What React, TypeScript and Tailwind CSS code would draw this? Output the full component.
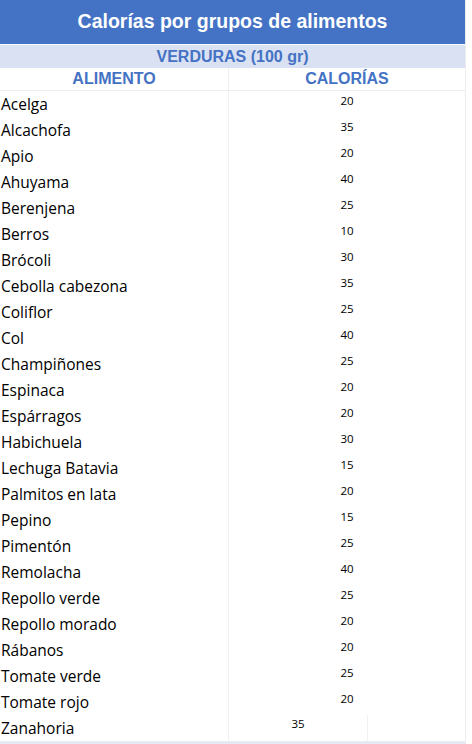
import React from "react";

const rows: [string, string][] = [
  ["Acelga", "20"],
  ["Alcachofa", "35"],
  ["Apio", "20"],
  ["Ahuyama", "40"],
  ["Berenjena", "25"],
  ["Berros", "10"],
  ["Brócoli", "30"],
  ["Cebolla cabezona", "35"],
  ["Coliflor", "25"],
  ["Col", "40"],
  ["Champiñones", "25"],
  ["Espinaca", "20"],
  ["Espárragos", "20"],
  ["Habichuela", "30"],
  ["Lechuga Batavia", "15"],
  ["Palmitos en lata", "20"],
  ["Pepino", "15"],
  ["Pimentón", "25"],
  ["Remolacha", "40"],
  ["Repollo verde", "25"],
  ["Repollo morado", "20"],
  ["Rábanos", "20"],
  ["Tomate verde", "25"],
  ["Tomate rojo", "20"],
];

export default function App() {
  return (
    <div className="w-[472px] h-[744px] bg-white overflow-hidden flex flex-col">
      <div className="w-[466px] flex flex-col border-r border-[#ececec]">
        <div className="h-[44px] bg-[#4472c4] flex items-center justify-center text-white font-bold text-[19.5px] font-['Liberation_Sans',Arial,sans-serif]">
          Calorías por grupos de alimentos
        </div>
        <div className="h-[23px] mt-[1px] bg-[#d9e1f2] flex items-center justify-center text-[#4472c4] font-bold text-[16px] font-['Liberation_Sans',Arial,sans-serif]">
          VERDURAS (100 gr)
        </div>
        <div className="h-[23px] flex border-b border-[#eeeeee] text-[#4472c4] font-bold text-[16px] font-['Liberation_Sans',Arial,sans-serif]">
          <div className="w-[229px] border-r border-[#eeeeee] flex items-center justify-center">ALIMENTO</div>
          <div className="flex-1 flex items-center justify-center">CALORÍAS</div>
        </div>
        {rows.map(([name, cal]) => (
          <div key={name} className="h-[26px] flex font-['Open_Sans','Noto_Sans',sans-serif] text-black">
            <div className="w-[229px] border-r border-[#f0f0f0] pl-[1px] text-[15.5px] leading-[26px] whitespace-nowrap">{name}</div>
            <div className="flex-1 text-center text-[11.5px] leading-[18px] pt-[1px]">{cal}</div>
          </div>
        ))}
        <div className="h-[26px] flex font-['Open_Sans','Noto_Sans',sans-serif] text-black">
          <div className="w-[229px] border-r border-[#f0f0f0] pl-[1px] text-[15.5px] leading-[26px]">Zanahoria</div>
          <div className="w-[139px] border-r border-[#f0f0f0] text-center text-[11.5px] leading-[18px]">35</div>
          <div className="flex-1"></div>
        </div>
      </div>
      <div className="h-[4px] bg-[#e6ebf3] w-[466px]"></div>
    </div>
  );
}
